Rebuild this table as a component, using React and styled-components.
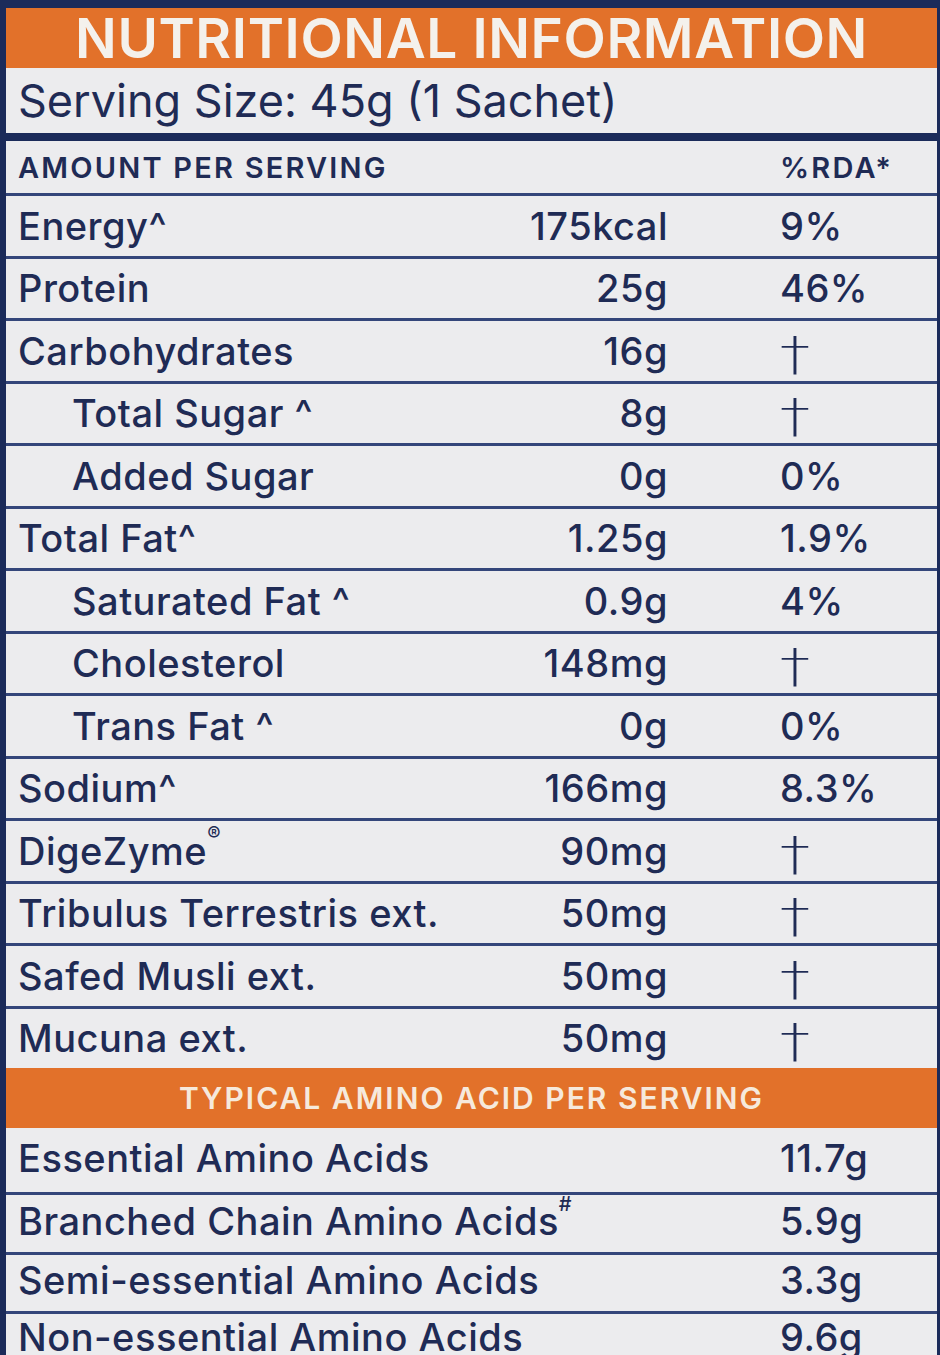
import React from 'react'
import styled, { createGlobalStyle } from 'styled-components'

// colours taken from the label
const navy = '#1b2b5a'
const ink = '#1f2b55'
const rule = '#34467a'
const orange = '#e2712a'
const paper = '#ececee'

const GlobalStyle = createGlobalStyle`
  html, body {
    margin: 0;
    padding: 0;
    background: ${paper};
    overflow: hidden;
  }
  body {
    font-family: Inter, "Open Sans", "Liberation Sans", sans-serif;
    color: ${ink};
  }
`

const Frame = styled.div`
  width: 940px;
  box-sizing: border-box;
  border-top: 8px solid ${navy};
  border-left: 6px solid ${navy};
  border-right: 3px solid ${navy};
  background: ${paper};
`

const Title = styled.div`
  height: 60px;
  background: ${orange};
  color: #f4f1ec;
  display: flex;
  align-items: center;
  justify-content: center;
  font-size: 55px;
  font-weight: 600;
  letter-spacing: 0.6px;
`

const Serving = styled.div`
  height: 65px;
  display: flex;
  align-items: center;
  padding-left: 12px;
  font-size: 45px;
  font-weight: 400;
  border-bottom: 8px solid ${navy};
`

const Row = styled.div`
  box-sizing: border-box;
  height: ${p => p.$h || 62.5}px;
  display: grid;
  grid-template-columns: ${p => (p.$amino ? '762px 1fr' : '450px 200px 1fr')};
  align-items: center;
  padding-left: 12px;
  padding-bottom: ${p => p.$pad || 0}px;
  border-top: ${p => (p.$first ? 'none' : `3px solid ${rule}`)};
  font-size: ${p => (p.$head ? 29 : 38)}px;
  font-weight: ${p => (p.$head ? 600 : 500)};
  letter-spacing: ${p => (p.$head ? 2.2 : 0.5)}px;
`

const Label = styled.div`
  padding-left: ${p => (p.$indent ? 54 : 0)}px;
  white-space: nowrap;
`

const Value = styled.div`
  text-align: right;
  white-space: nowrap;
`

const Rda = styled.div`
  padding-left: ${p => (p.$amino ? 0 : 112)}px;
  white-space: nowrap;
  display: flex;
  align-items: center;
`

// the "not established" mark, a thin wide dagger
const Dagger = styled.span`
  display: inline-block;
  font-family: "DejaVu Sans", sans-serif;
  font-weight: 200;
  font-size: 46px;
  line-height: 1;
  letter-spacing: 0;
  position: relative;
  top: 3px;
  transform: scaleX(1.3);
  transform-origin: left center;
`

const Sup = styled.sup`
  font-size: 20px;
  letter-spacing: 0;
  vertical-align: top;
  position: relative;
  top: -6px;
`

const AminoHead = styled.div`
  height: 60px;
  background: ${orange};
  color: #f6e9dc;
  display: flex;
  align-items: center;
  justify-content: center;
  font-size: 30px;
  font-weight: 600;
  letter-spacing: 2px;
`

const nutrients = [
  { name: 'Energy^', value: '175kcal', rda: '9%' },
  { name: 'Protein', value: '25g', rda: '46%' },
  { name: 'Carbohydrates', value: '16g', rda: null },
  { name: 'Total Sugar ^', value: '8g', rda: null, indent: true },
  { name: 'Added Sugar', value: '0g', rda: '0%', indent: true },
  { name: 'Total Fat^', value: '1.25g', rda: '1.9%' },
  { name: 'Saturated Fat ^', value: '0.9g', rda: '4%', indent: true },
  { name: 'Cholesterol', value: '148mg', rda: null, indent: true },
  { name: 'Trans Fat ^', value: '0g', rda: '0%', indent: true },
  { name: 'Sodium^', value: '166mg', rda: '8.3%' },
  { name: 'DigeZyme', sup: '®', value: '90mg', rda: null },
  { name: 'Tribulus Terrestris ext.', value: '50mg', rda: null },
  { name: 'Safed Musli ext.', value: '50mg', rda: null },
  { name: 'Mucuna ext.', value: '50mg', rda: null }
]

const aminos = [
  { name: 'Essential Amino Acids', value: '11.7g', h: 64, pad: 4 },
  { name: 'Branched Chain Amino Acids', sup: '#', value: '5.9g', h: 60, pad: 6 },
  { name: 'Semi-essential Amino Acids', value: '3.3g', h: 59, pad: 7 },
  { name: 'Non-essential Amino Acids', value: '9.6g', h: 60, pad: 12 }
]

const App = () => {
  return (
    <>
      <GlobalStyle />
      <Frame>
        <Title>NUTRITIONAL INFORMATION</Title>
        <Serving>Serving Size: 45g (1 Sachet)</Serving>

        <Row $first $head $h={52}>
          <Label>AMOUNT PER SERVING</Label>
          <Value />
          <Rda>%RDA*</Rda>
        </Row>

        {nutrients.map(n => (
          <Row key={n.name}>
            <Label $indent={n.indent}>
              {n.name}
              {n.sup && <Sup>{n.sup}</Sup>}
            </Label>
            <Value>{n.value}</Value>
            <Rda>{n.rda || <Dagger>†</Dagger>}</Rda>
          </Row>
        ))}

        <AminoHead>TYPICAL AMINO ACID PER SERVING</AminoHead>

        {aminos.map((a, i) => (
          <Row key={a.name} $amino $first={i === 0} $h={a.h} $pad={a.pad}>
            <Label>
              {a.name}
              {a.sup && <Sup>{a.sup}</Sup>}
            </Label>
            <Rda $amino>{a.value}</Rda>
          </Row>
        ))}
      </Frame>
    </>
  )
}

export default App
